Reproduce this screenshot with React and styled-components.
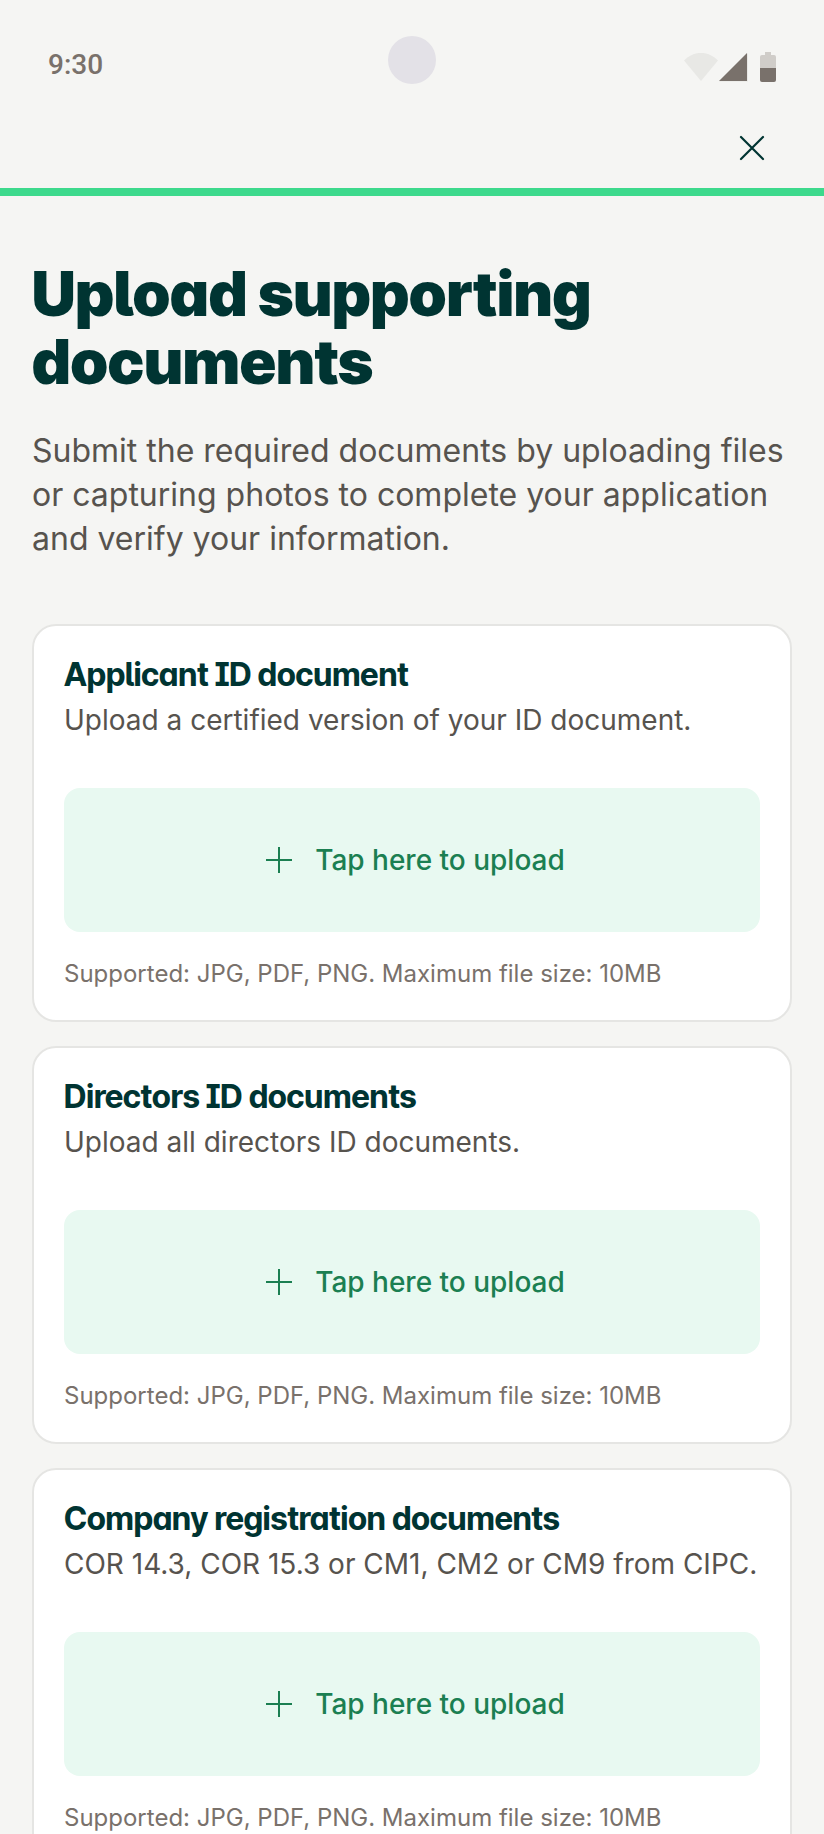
import React from "react";
import styled, { createGlobalStyle } from "styled-components";

const GlobalStyle = createGlobalStyle`
  *, *::before, *::after { box-sizing: border-box; }
  body {
    margin: 0;
    background: #f5f5f3;
    color: #57534e;
    font-family: Inter, "Liberation Sans", sans-serif;
  }
  h1, h2, p { margin: 0; }
  button { font: inherit; border: 0; padding: 0; cursor: pointer; }
`;

const StatusBar = styled.div`
  display: grid;
  grid-template-columns: 1fr 48px 1fr;
  height: 108px;
  padding: 36px 48px 0;
  color: #79716b;
`;

const Time = styled.time`
  padding-top: 8px;
  font-family: Roboto, "Liberation Sans", sans-serif;
  font-size: 28px;
  font-weight: 500;
  line-height: 42px;
`;

const Camera = styled.div`
  width: 48px;
  height: 48px;
  border-radius: 50%;
  background: #e3e1e7;
`;

const StatusIcons = styled.div`
  display: flex;
  justify-content: flex-end;
  padding-top: 16px;

  svg { display: block; }
`;

const TopBar = styled.header`
  display: flex;
  justify-content: flex-end;
  padding: 16px 48px;
`;

const CloseButton = styled.button`
  width: 48px;
  height: 48px;
  background: none;
  color: #003432;

  svg { display: block; }
`;

const Progress = styled.div`
  height: 8px;
  background: #3dd98c;
`;

const Content = styled.main`
  padding: 64px 32px 32px;
`;

const Title = styled.h1`
  color: #003432;
  font-family: "Inter Tight", Inter, sans-serif;
  font-size: 62px;
  font-weight: 900;
  line-height: 68px;
  font-feature-settings: "cv05", "cv11";
`;

const Intro = styled.p`
  margin-top: 33px;
  font-size: 32px;
  line-height: 44px;
`;

const CardList = styled.div`
  display: flex;
  flex-direction: column;
  gap: 24px;
  margin-top: 63px;
`;

const Card = styled.section`
  padding: 30px;
  border: 2px solid #e5e5e3;
  border-radius: 24px;
  background: #fff;
`;

const CardTitle = styled.h2`
  color: #003432;
  font-family: "Inter Tight", Inter, sans-serif;
  font-size: 32px;
  font-weight: 700;
  line-height: 38px;
  font-feature-settings: "cv05", "cv08", "cv11";
`;

const CardText = styled.p`
  margin-top: 6px;
  font-size: 28px;
  line-height: 40px;
`;

const UploadButton = styled.button`
  display: flex;
  align-items: center;
  justify-content: center;
  gap: 16px;
  width: 100%;
  height: 144px;
  margin: 48px 0 26px;
  border-radius: 16px;
  background: #e8f9f1;
  color: #1b7f52;
  font-size: 28px;
  font-weight: 500;
  line-height: 40px;
`;

const Hint = styled.p`
  color: #79716b;
  font-size: 24px;
  line-height: 32px;
`;

const documents = [
  { id: "applicant", title: "Applicant ID document", text: "Upload a certified version of your ID document." },
  { id: "directors", title: "Directors ID documents", text: "Upload all directors ID documents." },
  { id: "company", title: "Company registration documents", text: "COR 14.3, COR 15.3 or CM1, CM2 or CM9 from CIPC." },
];

const PlusIcon = () => (
  <svg width="40" height="40" viewBox="0 0 40 40" fill="none" stroke="currentColor" strokeWidth="2" aria-hidden="true">
    <path d="M20 7v26M7 20h26" />
  </svg>
);

const CloseIcon = () => (
  <svg width="48" height="48" viewBox="0 0 48 48" fill="none" stroke="currentColor" strokeWidth="2.200" strokeLinecap="round" aria-hidden="true">
    <path d="M13 13l22 22M35 13L13 35" />
  </svg>
);

const PhoneStatus = () => (
  <svg width="92" height="30" viewBox="0 0 92 30" fill="#79716b" aria-hidden="true">
    <path opacity="0.1" d="M17 29L0 8.500C5 3.500 10.500 1 17 1s12 2.500 17 7.500L17 29z" />
    <path opacity="0.1" d="M35 29.500L64 1v28.500z" />
    <path d="M35 29L63 1v28z" />
    <path opacity="0.3" d="M76 16V5a2 2 0 0 1 2-2h3V0h6v3h3a2 2 0 0 1 2 2v11z" />
    <path d="M76 16h16v12a2 2 0 0 1-2 2H78a2 2 0 0 1-2-2z" />
  </svg>
);

function DocumentCard({ id, title, text }) {
  return (
    <Card aria-labelledby={`${id}-title`}>
      <CardTitle id={`${id}-title`}>{title}</CardTitle>
      <CardText>{text}</CardText>
      <UploadButton type="button" aria-describedby={`${id}-hint`}>
        <PlusIcon />
        Tap here to upload
      </UploadButton>
      <Hint id={`${id}-hint`}>Supported: JPG, PDF, PNG. Maximum file size: 10MB</Hint>
    </Card>
  );
}

export default function App() {
  return (
    <>
      <GlobalStyle />
      <StatusBar>
        <Time>9:30</Time>
        <Camera />
        <StatusIcons>
          <PhoneStatus />
        </StatusIcons>
      </StatusBar>
      <TopBar>
        <CloseButton type="button" aria-label="Close">
          <CloseIcon />
        </CloseButton>
      </TopBar>
      <Progress />
      <Content>
        <Title>Upload supporting documents</Title>
        <Intro>
          Submit the required documents by uploading files or capturing photos to complete your application and verify
          your information.
        </Intro>
        <CardList>
          {documents.map((doc) => (
            <DocumentCard key={doc.id} {...doc} />
          ))}
        </CardList>
      </Content>
    </>
  );
}
